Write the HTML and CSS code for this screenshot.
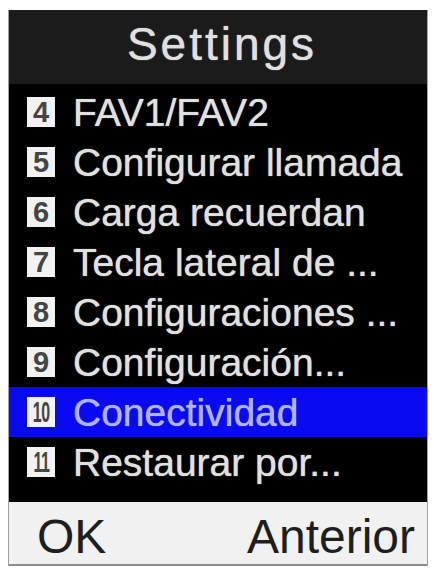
FILE: index.html
```html
<!DOCTYPE html>
<html lang="es">
<head>
    <meta charset="UTF-8">
    <meta name="viewport" content="width=device-width, initial-scale=1.0">
    <title>Settings</title>
    <link rel="stylesheet" href="styles.css">
</head>
<body>
    <div class="screen">
        <div class="header">
            <div class="title">Settings</div>
        </div>
        <div class="list">
            <div class="row"><span class="num">4</span><span class="label">FAV1/FAV2</span></div>
            <div class="row"><span class="num">5</span><span class="label">Configurar llamada</span></div>
            <div class="row"><span class="num">6</span><span class="label">Carga recuerdan</span></div>
            <div class="row"><span class="num">7</span><span class="label">Tecla lateral de ...</span></div>
            <div class="row"><span class="num">8</span><span class="label">Configuraciones ...</span></div>
            <div class="row"><span class="num">9</span><span class="label">Configuración...</span></div>
            <div class="row row-active"><span class="num num-wide"><span>10</span></span><span class="label">Conectividad</span></div>
            <div class="row"><span class="num num-wide"><span>11</span></span><span class="label">Restaurar por...</span></div>
        </div>
        <div class="footer">
            <span class="soft">OK</span>
            <span class="soft">Anterior</span>
        </div>
    </div>
</body>
</html>
```

FILE: styles.css
```css
* {
    margin: 0;
    padding: 0;
    box-sizing: border-box;
}

body {
    background: #fff;
    font-family: "Liberation Sans", Arial, sans-serif;
}

.screen {
    width: 420px;
    margin: 10px 0 0 8px;
    border-left: 1px solid #a0a0a0;
    border-right: 1px solid #a0a0a0;
}

.header {
    height: 74px;
    background: #1b1b1b;
    display: flex;
    justify-content: center;
    align-items: center;
}

.title {
    color: #e0e0e0;
    font-size: 46px;
    letter-spacing: 3px;
    line-height: 1;
    margin-top: -6px;
    margin-left: 8px;
    text-shadow: 0 0 1px #e0e0e0;
}

.list {
    background: #000;
    padding: 3px 0 15px;
}

.row {
    height: 50px;
    display: flex;
    align-items: center;
    padding-left: 18px;
    color: #e0e0e0;
}

.row-active {
    background: #0a0af2;
    color: #b0b4ff;
}

.label {
    font-size: 39px;
    line-height: 1;
    white-space: nowrap;
    text-shadow: 0 0 1px currentColor;
}

.num {
    width: 28px;
    height: 30px;
    background: #f2f2f2;
    color: #444;
    font-size: 29px;
    font-weight: bold;
    line-height: 31px;
    text-align: center;
    margin-right: 18px;
    flex-shrink: 0;
    overflow: hidden;
}

.num-wide span {
    display: inline-block;
    transform: scaleX(0.55);
    letter-spacing: -1px;
    margin-left: -8px;
    margin-right: -8px;
}

.footer {
    height: 64px;
    background: #f1f1f1;
    border-bottom: 2px solid #8a8a8a;
    display: flex;
    justify-content: space-between;
    align-items: center;
    padding: 0 12px 0 28px;
}

.soft {
    font-size: 48px;
    line-height: 1;
    color: #1e1e1e;
    margin-top: 8px;
}
```
